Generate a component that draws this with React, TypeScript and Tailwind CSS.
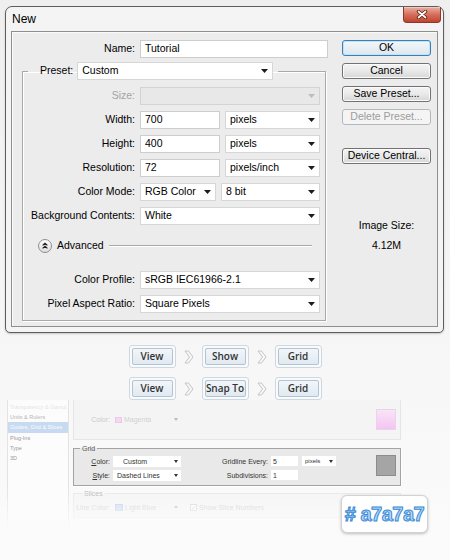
import React from "react";

function Caret({ light }: { light?: boolean }) {
  return (
    <svg width="7" height="4" viewBox="0 0 7 4" className="shrink-0">
      <path d="M0 0H7L3.5 4Z" fill={light ? "#bdbdbd" : "#1c1c1c"} />
    </svg>
  );
}

function Drop({ value, className, disabled }: { value: string; className: string; disabled?: boolean }) {
  return (
    <div
      className={`h-[18px] border flex items-center justify-between pl-[4px] pr-[4px] ${
        disabled ? "bg-[#e8e8e8] border-[#d3d3d3]" : "bg-white border-[#d6d6d6]"
      } ${className}`}
    >
      <span>{value}</span>
      <Caret light={disabled} />
    </div>
  );
}

function Input({ value, className }: { value: string; className: string }) {
  return (
    <div className={`h-[18px] bg-white border border-[#cdcdcd] flex items-center pl-[4px] ${className}`}>{value}</div>
  );
}

function Row({ label, children, disabled }: { label: string; children: React.ReactNode; disabled?: boolean }) {
  return (
    <div className="flex items-center gap-[5px] h-[18px]">
      <span className={`w-[112px] text-right ${disabled ? "text-[#a3a3a3]" : "text-black"}`}>{label}</span>
      {children}
    </div>
  );
}

function Btn({ label, kind }: { label: string; kind?: "ok" | "off" }) {
  if (kind === "ok")
    return (
      <div className="h-[16px] rounded-[3px] border border-[#3d7fb4] bg-gradient-to-b from-[#f3f7fa] to-[#dde6ee] shadow-[inset_0_0_0_1px_#bfe3f8] flex items-center justify-center">
        {label}
      </div>
    );
  if (kind === "off")
    return (
      <div className="h-[16px] rounded-[3px] border border-[#b4b8bb] bg-[#f4f4f4] text-[#9c9c9c] flex items-center justify-center">
        {label}
      </div>
    );
  return (
    <div className="h-[16px] rounded-[3px] border border-[#727272] bg-gradient-to-b from-[#f4f4f4] via-[#e9e9e9] to-[#d6d6d6] shadow-[inset_0_0_0_1px_#fbfbfb] flex items-center justify-center">
      {label}
    </div>
  );
}

function Crumb({ label }: { label: string }) {
  return (
    <div className="w-[47px] h-[23px] rounded-[3px] border border-[#cfd8e1] bg-[#f8fafc] p-[2px]">
      <div className="h-full rounded-[2px] border border-[#b4c3d2] bg-gradient-to-b from-[#f2f6fa] to-[#e1e9f1] flex items-center justify-center text-[10px] font-semibold text-[#333] font-['Open_Sans',sans-serif]">
        {label}
      </div>
    </div>
  );
}

function Chevron() {
  return (
    <svg width="10" height="14" viewBox="0 0 10 14" className="shrink-0">
      <path d="M1 1H4.5L9 7L4.5 13H1L5.5 7Z" fill="#f7f7f7" stroke="#c4c4c4" strokeWidth="1" strokeLinejoin="round" />
    </svg>
  );
}

function MiniCaret() {
  return (
    <svg width="4" height="3" viewBox="0 0 4 3" className="shrink-0">
      <path d="M0 0H4L2 3Z" fill="#333" />
    </svg>
  );
}

export default function App() {
  return (
    <div className="w-[450px] h-[560px] overflow-hidden relative bg-gradient-to-b from-[#efefef] via-[#f5f5f5] to-[#fbfbfb] flex flex-col pt-[6px] font-['Liberation_Sans',Arial,sans-serif] text-[10.5px] text-black">
      {/* Dialog */}
      <div className="ml-[5px] w-[439px] h-[327px] border border-[#5e5e5e] rounded-t-[7px] rounded-b-[5px] bg-[#f4f4f4] flex flex-col px-[5px] pb-[5px] shadow-[0_1px_2px_rgba(0,0,0,0.2)]">
        <div className="h-[24px] flex items-start justify-between">
          <span className="pl-[1px] pt-[5px] text-[12px] leading-[14px]">New</span>
          <div className="-mr-[3px] w-[38px] h-[16px] rounded-b-[4px] border border-t-0 border-[#8a392b] bg-gradient-to-b from-[#eab0a3] via-[#d56f5b] to-[#c0432e] shadow-[inset_0_1px_0_rgba(255,255,255,0.35)] flex items-center justify-center">
            <svg width="12" height="9" viewBox="0 0 12 9">
              <path d="M2.5 1.5L9.5 7.5M9.5 1.5L2.5 7.5" stroke="#5a2016" strokeWidth="3.4" strokeLinecap="round" />
              <path d="M2.5 1.5L9.5 7.5M9.5 1.5L2.5 7.5" stroke="#ffffff" strokeWidth="1.7" strokeLinecap="round" />
            </svg>
          </div>
        </div>
        <div className="flex-1 border border-[#8f8f8f] bg-[#ececec] shadow-[inset_1px_1px_0_#fafafa] flex pt-[8px] gap-[14px]">
          {/* left column */}
          <div className="w-[316px] flex flex-col">
            <div className="flex items-center gap-[5px] h-[18px]">
              <span className="w-[123px] text-right">Name:</span>
              <Input value="Tutorial" className="w-[188px]" />
            </div>
            <fieldset className="mt-[4px] ml-[10px] w-[304px] border border-[#a9a9a9] shadow-[inset_1px_1px_0_#ffffff,1px_1px_0_#ffffff] pb-[7px]">
              <legend className="ml-[5px] pl-[12px] pr-[5px]">
                <div className="flex items-center gap-[4px] h-[18px]">
                  <span>Preset:</span>
                  <Drop value="Custom" className="w-[196px]" />
                </div>
              </legend>
              <div className="flex flex-col gap-[6px] pt-[7px]">
                <Row label="Size:" disabled>
                  <Drop value="" className="w-[180px]" disabled />
                </Row>
                <Row label="Width:">
                  <Input value="700" className="w-[80px]" />
                  <Drop value="pixels" className="w-[95px]" />
                </Row>
                <Row label="Height:">
                  <Input value="400" className="w-[80px]" />
                  <Drop value="pixels" className="w-[95px]" />
                </Row>
                <Row label="Resolution:">
                  <Input value="72" className="w-[80px]" />
                  <Drop value="pixels/inch" className="w-[95px]" />
                </Row>
                <Row label="Color Mode:">
                  <Drop value="RGB Color" className="w-[76px]" />
                  <Drop value="8 bit" className="w-[99px]" />
                </Row>
                <Row label="Background Contents:">
                  <Drop value="White" className="w-[180px]" />
                </Row>
              </div>
              <div className="mt-[13px] h-[16px] flex items-center pl-[15px] pr-[13px]">
                <svg width="14" height="14" viewBox="0 0 14 14" className="shrink-0">
                  <defs>
                    <linearGradient id="adv" x1="0" y1="0" x2="0" y2="1">
                      <stop offset="0" stopColor="#ffffff" />
                      <stop offset="1" stopColor="#dcdcdc" />
                    </linearGradient>
                  </defs>
                  <circle cx="7" cy="7" r="6.5" fill="url(#adv)" stroke="#8e8e8e" />
                  <path d="M4.6 6.4L7 4.2L9.4 6.4M4.6 9.4L7 7.2L9.4 9.4" fill="none" stroke="#222" strokeWidth="1.2" />
                </svg>
                <span className="ml-[5px]">Advanced</span>
                <div className="ml-[5px] flex-1 h-[2px] border-t border-[#a8a8a8] border-b border-b-white" />
              </div>
              <div className="flex flex-col gap-[6px] mt-[17px]">
                <Row label="Color Profile:">
                  <Drop value="sRGB IEC61966-2.1" className="w-[180px]" />
                </Row>
                <Row label="Pixel Aspect Ratio:">
                  <Drop value="Square Pixels" className="w-[180px]" />
                </Row>
              </div>
            </fieldset>
          </div>
          {/* right column */}
          <div className="w-[89px] flex flex-col">
            <div className="flex flex-col gap-[7px]">
              <Btn label="OK" kind="ok" />
              <Btn label="Cancel" />
              <Btn label="Save Preset..." />
              <Btn label="Delete Preset..." kind="off" />
            </div>
            <div className="mt-[23px]">
              <Btn label="Device Central..." />
            </div>
            <div className="mt-[55px] text-center leading-[13px]">Image Size:</div>
            <div className="mt-[7px] text-center leading-[13px]">4.12M</div>
          </div>
        </div>
      </div>

      {/* Breadcrumbs */}
      <div className="mt-[12px] flex flex-col gap-[9px] items-center">
        <div className="flex items-center gap-[8px]">
          <Crumb label="View" />
          <Chevron />
          <Crumb label="Show" />
          <Chevron />
          <Crumb label="Grid" />
        </div>
        <div className="flex items-center gap-[8px]">
          <Crumb label="View" />
          <Chevron />
          <Crumb label="Snap To" />
          <Chevron />
          <Crumb label="Grid" />
        </div>
      </div>

      {/* Preferences snapshot */}
      <div className="relative flex-1 flex text-[7px] leading-[9px] text-[#333]">
        <div className="ml-[7px] w-[62px] h-[128px] border-x border-[#d6d6d6] bg-white flex flex-col pt-[2px] text-[5.5px] leading-[10.2px] opacity-60">
          <div className="pl-[2px] text-[#d8d8d8] whitespace-nowrap">Transparency & Gamut</div>
          <div className="pl-[2px] text-[#888]">Units & Rulers</div>
          <div className="pl-[2px] bg-[#a7c7ee] text-white whitespace-nowrap">Guides, Grid & Slices</div>
          <div className="pl-[2px] text-[#555]">Plug-Ins</div>
          <div className="pl-[2px] text-[#555]">Type</div>
          <div className="pl-[2px] text-[#555]">3D</div>
        </div>
        <div className="ml-[4px] w-[328px] flex flex-col">
          {/* guides */}
          <div className="h-[40px] border-x border-b border-[#d4d4d4] bg-[#f2f2f2] flex items-center opacity-50">
            <span className="w-[36px] text-right text-[#999]">Color:</span>
            <div className="ml-[5px] w-[66px] h-[10px] flex items-center gap-[2px] pr-[3px]">
              <div className="w-[7px] h-[6px] bg-[#f6b8f1] border border-[#d9a0d4]" />
              <span className="text-[#aaa]">Magenta</span>
              <div className="ml-auto opacity-60">
                <MiniCaret />
              </div>
            </div>
            <div className="ml-auto mr-[4px] w-[20px] h-[21px] bg-gradient-to-b from-[#f9d2f6] to-[#f291ee] border border-[#ddb0da]" />
          </div>
          {/* grid */}
          <fieldset className="mt-[4px] border border-[#a3a3a3] bg-[#e9e9e9] pb-[4px] shadow-[1px_1px_0_#ffffff]">
            <legend className="ml-[6px] px-[2px] leading-[9px] text-[#555]">Grid</legend>
            <div className="flex items-start pt-[3px]">
              <div className="flex flex-col gap-[3px]">
                <div className="flex items-center h-[11px]">
                  <span className="w-[36px] text-right">
                    <span className="underline">C</span>olor:
                  </span>
                  <div className="ml-[3px] w-[68px] h-[11px] bg-white flex items-center pl-[10px] pr-[3px]">
                    <span>Custom</span>
                    <div className="ml-auto">
                      <MiniCaret />
                    </div>
                  </div>
                </div>
                <div className="flex items-center h-[11px]">
                  <span className="w-[36px] text-right">
                    <span className="underline">S</span>tyle:
                  </span>
                  <div className="ml-[3px] w-[68px] h-[11px] bg-white flex items-center pl-[4px] pr-[3px]">
                    <span>Dashed Lines</span>
                    <div className="ml-auto">
                      <MiniCaret />
                    </div>
                  </div>
                </div>
              </div>
              <div className="ml-[27px] flex flex-col gap-[4px]">
                <div className="flex items-center h-[10px]">
                  <span className="w-[60px] text-right">Gridline Every:</span>
                  <div className="ml-[3px] w-[27px] h-[10px] bg-white pl-[2px] flex items-center">5</div>
                  <div className="ml-[4px] w-[34px] h-[10px] bg-white flex items-center pl-[3px] pr-[3px]">
                    <span className="text-[6px]">pixels</span>
                    <div className="ml-auto">
                      <MiniCaret />
                    </div>
                  </div>
                </div>
                <div className="flex items-center h-[10px]">
                  <span className="w-[60px] text-right">Subdivisions:</span>
                  <div className="ml-[3px] w-[27px] h-[10px] bg-white pl-[2px] flex items-center">1</div>
                </div>
              </div>
              <div className="ml-auto mr-[4px] -mt-[1px] w-[20px] h-[21px] bg-[#a5a5a5] border border-[#8c8c8c]" />
            </div>
          </fieldset>
          {/* slices */}
          <fieldset className="mt-[3px] border border-[#dcdcdc] bg-[#f3f3f3] pb-[5px] opacity-60">
            <legend className="ml-[8px] px-[2px] leading-[9px] text-[#888]">Slices</legend>
            <div className="flex items-center h-[9px] mt-[5px]">
              <span className="w-[36px] text-right text-[#aaa] whitespace-nowrap">Line Color:</span>
              <div className="ml-[3px] w-[68px] h-[9px] flex items-center gap-[2px] pl-[2px] pr-[3px]">
                <div className="w-[8px] h-[7px] bg-[#afc2f0] border border-[#8fa6dc]" />
                <span className="text-[#aaa]">Light Blue</span>
                <div className="ml-auto opacity-50">
                  <MiniCaret />
                </div>
              </div>
              <div className="ml-[9px] w-[7px] h-[7px] border border-[#bbb] bg-white flex items-center justify-center text-[6px] leading-[6px] text-[#999]">
                ✓
              </div>
              <span className="ml-[2px] text-[#aaa] whitespace-nowrap">Show Slice Numbers</span>
            </div>
          </fieldset>
        </div>
        {/* fade overlay */}
        <div className="absolute left-0 right-0 top-[88px] bottom-0 bg-gradient-to-b from-transparent via-[#fbfbfb]/90 to-[#fbfbfb] pointer-events-none" />
        {/* color badge */}
        <div className="absolute left-[341px] top-[95px] w-[87px] h-[38px] rounded-[6px] bg-white border border-[#d2d2d2] shadow-[0_1px_3px_rgba(0,0,0,0.25)] flex items-center justify-center">
          <span className="text-[20px] leading-[22px] font-bold text-[#b5d8f5] [-webkit-text-stroke:1px_#3a8ad6] font-['Liberation_Sans',Arial,sans-serif] tracking-[-0.5px]">
            # a7a7a7
          </span>
        </div>
      </div>
    </div>
  );
}
